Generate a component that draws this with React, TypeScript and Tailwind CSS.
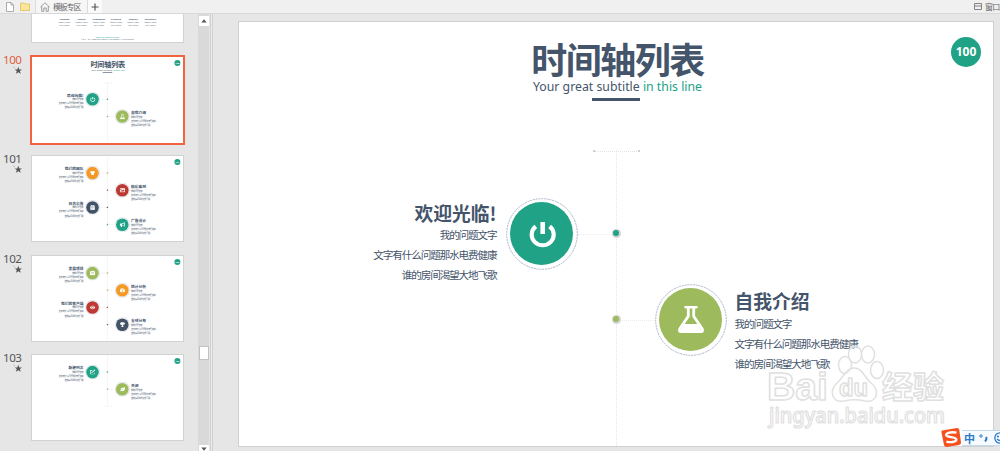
import { FC, ReactNode } from "react";
import {
  FaBullhorn,
  FaCalendarAlt,
  FaCamera,
  FaEye,
  FaExternalLinkAlt,
  FaImage,
  FaLeaf,
  FaTachometerAlt,
  FaTrophy,
  FaTshirt,
} from "react-icons/fa";

interface Item {
  title: string;
  color: string;
  icon: ReactNode;
}

interface SlideType {
  page: number;
  items: Item[];
  heading?: boolean;
  end?: boolean;
}

const GREEN = "#20a286";
const LIME = "#9dbb5c";
const ORANGE = "#f39a26";
const RED = "#bd3931";
const NAVY = "#425267";

const PowerIcon = () => (
  <svg width="28" height="28" viewBox="0 0 28 28" fill="none" stroke="white" strokeWidth="4.2">
    <path d="M7.8 6.4 A11 10.6 0 1 0 21.6 6.4" />
    <path d="M14.7 2 V14" strokeWidth="4.6" />
  </svg>
);

const FlaskIcon = () => (
  <svg width="28" height="28" viewBox="0 0 28 28" fill="none" stroke="white" strokeLinejoin="round">
    <path d="M8.6 1.1 H19.4" strokeWidth="2.7" strokeLinecap="round" />
    <path d="M11.3 2 V10.2 L2.8 22.8 Q1.6 25.6 4 25.6 H24 Q26.4 25.6 25.2 22.8 L16.7 10.2 V2" strokeWidth="2.8" />
    <path d="M7.2 18 H20.8 L25 25.6 H3 Z" fill="white" stroke="none" />
  </svg>
);

const slides: SlideType[] = [
  {
    page: 100,
    heading: true,
    items: [
      { title: "欢迎光临!", color: GREEN, icon: <PowerIcon /> },
      { title: "自我介绍", color: LIME, icon: <FlaskIcon /> },
    ],
  },
  {
    page: 101,
    items: [
      { title: "我们的团队", color: ORANGE, icon: <FaTshirt /> },
      { title: "精彩案例", color: RED, icon: <FaImage /> },
      { title: "日志公告", color: NAVY, icon: <FaCalendarAlt /> },
      { title: "广告设计", color: GREEN, icon: <FaBullhorn /> },
    ],
  },
  {
    page: 102,
    items: [
      { title: "发展项目", color: LIME, icon: <FaCamera /> },
      { title: "统计分析", color: ORANGE, icon: <FaTachometerAlt /> },
      { title: "我们的客户端", color: RED, icon: <FaEye /> },
      { title: "全球分布", color: NAVY, icon: <FaTrophy /> },
    ],
  },
  {
    page: 103,
    end: true,
    items: [
      { title: "新建列表", color: GREEN, icon: <FaExternalLinkAlt /> },
      { title: "关闭", color: LIME, icon: <FaLeaf /> },
    ],
  },
];

const Copy: FC<{ title: string; right?: boolean }> = ({ title, right }) => (
  <div
    className={
      right
        ? "pt-[13px] pl-2 text-left whitespace-nowrap"
        : "pt-[11px] pr-[9px] text-right whitespace-nowrap"
    }
  >
    <h2 className={right ? "mb-[3px] text-[18.8px] leading-[21px] font-bold" : "mb-[2px] text-[18.8px] leading-[21px] font-bold"}>
      {title}
    </h2>
    <div className="text-[10.6px] leading-[20.4px] tracking-[-1.12px]">
      <p>我的问题文字</p>
      <p>文字有什么问题那水电费健康</p>
      <p>谁的房间渴望大地飞歌</p>
    </div>
  </div>
);

const Circle: FC<{ item: Item }> = ({ item }) => (
  <div className="relative mt-[7px] flex size-[72px] shrink-0 items-center justify-center">
    <svg className="absolute inset-0" width="72" height="72" viewBox="0 0 72 72" fill="none">
      <circle cx="36" cy="36" r="35.3" stroke="#a9b6ca" strokeWidth="1" strokeDasharray="2 .8" />
    </svg>
    <div
      className="flex size-[63px] items-center justify-center rounded-full text-[26px] text-white"
      style={{ backgroundColor: item.color }}
    >
      {item.icon}
    </div>
  </div>
);

const Connector = () => (
  <div className="mt-[43px] w-[38.5px] shrink-0 border-t border-dotted border-[#e9ebec]" />
);

const TimelineRow: FC<{ item: Item; right: boolean }> = ({ item, right }) => (
  <div className="relative grid h-[86px] grid-cols-2">
    <div className="flex justify-end">
      {!right && (
        <>
          <Copy title={item.title} />
          <Circle item={item} />
          <Connector />
        </>
      )}
    </div>
    <div className="flex">
      {right && (
        <>
          <Connector />
          <Circle item={item} />
          <Copy title={item.title} right />
        </>
      )}
    </div>
    <span className="absolute top-[38px] left-[372.5px] flex size-[9px] items-center justify-center rounded-full bg-[#d3d3d3]">
      <span className="size-[6px] rounded-full" style={{ backgroundColor: item.color }} />
    </span>
  </div>
);

const Cap = () => (
  <div className="mx-auto flex w-[47px] items-center justify-between">
    <span className="size-[2px] bg-[#d0d0d0]" />
    <span className="h-px w-[42px] border-t border-dotted border-[#e4e4e4]" />
    <span className="size-[2px] bg-[#d0d0d0]" />
  </div>
);

const Slide: FC<{ slide: SlideType }> = ({ slide }) => (
  <div className="relative h-[424px] w-[754px] overflow-hidden bg-white text-[#44546a]">
    <span className="absolute top-[15px] right-[12px] flex size-[30px] items-center justify-center rounded-full bg-[#20a286] font-['Open_Sans',sans-serif] text-[12px] font-bold text-white">
      {slide.page}
    </span>
    {slide.heading ? (
      <header className="flex h-[128px] flex-col items-center pt-[15px] pl-[3px]">
        <h1 className="text-[36px] leading-[42px] font-bold tracking-[-1.5px]">时间轴列表</h1>
        <p className="font-['Noto_Sans',sans-serif] text-[12.3px] leading-[16px] whitespace-nowrap">
          Your great subtitle <span className="text-[#20a286]">in this line</span>
        </p>
        <div className="mt-[3px] mr-[3px] h-[3px] w-[48px] bg-[#44546a]" />
      </header>
    ) : (
      <div className="h-[42px]" />
    )}
    <div
      className={
        slide.heading
          ? "relative h-[296px]"
          : slide.end
            ? "relative -mt-[42px] h-[255px] pt-[42px]"
            : "relative -mt-[42px] h-[424px] pt-[42px]"
      }
    >
      <div className="absolute inset-y-0 left-[377px] border-l border-dotted border-[#e4e6e8]" />
      {slide.heading && (
        <div className="h-[40.5px]">
          <Cap />
        </div>
      )}
      {slide.items.map((item, index) => (
        <TimelineRow key={item.title} item={item} right={index % 2 === 1} />
      ))}
    </div>
    {slide.end && <Cap />}
  </div>
);

const Thumbnail: FC<{ slide: SlideType; active: boolean }> = ({ slide, active }) => (
  <div className="flex h-[99.3px]">
    <div
      className={
        active
          ? "-mt-[1px] w-[30px] shrink-0 pl-[3px] text-[#e0603f]"
          : "-mt-[1px] w-[30px] shrink-0 pl-[3px] text-[#555]"
      }
    >
      <p className="font-['Noto_Sans',sans-serif] text-[11.6px] leading-[12px] tracking-[-0.5px]">
        {slide.page}
      </p>
      <svg className="ml-[10px]" width="10" height="9" viewBox="0 0 10 9">
        <path
          d="M5.3 .8 L6.3 3.4 H9 L6.9 5 L7.7 7.8 L5.3 6.2 L2.9 7.8 L3.8 5 L1.7 3.4 H4.3 Z"
          fill="#555"
        />
        <path d="M.5 .8 L2 2.2" stroke="#999" strokeWidth=".7" />
      </svg>
    </div>
    <div
      className={
        active
          ? "h-[90px] w-[155px] border-2 border-[#f26440] bg-white"
          : "h-[90px] w-[155px] p-[2px]"
      }
    >
      <div
        className={
          active
            ? "h-[86px] w-[151px] overflow-hidden"
            : "h-[85px] w-[151px] overflow-hidden bg-white ring-1 ring-[#d2d2d2]"
        }
      >
        <div className="origin-top-left scale-[0.2] [&_.border-dotted]:border-[#a5a9ad] [&_circle]:stroke-[3px]">
          <Slide slide={slide} />
        </div>
      </div>
    </div>
  </div>
);

const columns = ["Layouts", "Search", "Customize", "Pictures", "Sharing", "Structure"];

const PreviousThumbnail = () => (
  <div className="ml-[32px] h-[28px] w-[151px] overflow-hidden bg-white ring-1 ring-[#d2d2d2]">
    <div className="h-[140px] w-[754px] origin-top-left scale-[0.2] pt-[20px] text-center font-['Open_Sans',sans-serif] text-[#44546a]">
      <div className="mx-auto grid w-[516px] grid-cols-6 text-[12px] leading-[14px]">
        {columns.map((name) => (
          <div key={name}>
            <p className="font-bold">{name}</p>
            <p>Insert your</p>
            <p>text here</p>
          </div>
        ))}
      </div>
      <p className="mt-[46px] text-[11px] leading-[12px] text-[#20a286]">www.yourwebsite.com</p>
      <p className="text-[8px] leading-[12px]">
        © 2014 - PPT - PowerPoint Template. Your Company. All rights reserved
      </p>
    </div>
  </div>
);

const TopBar = () => (
  <header className="flex h-[14px] shrink-0 items-center border-b border-[#d9d9d9] bg-[#f0f0f0] text-[#666]">
    <div className="flex w-[35px] items-center gap-[6px] pl-[6px]">
      <svg width="8" height="10" viewBox="0 0 8 10" fill="white" stroke="#999" strokeWidth=".8">
        <path d="M.5 .5 H5 L7.5 3 V9.5 H.5 Z M5 .5 V3 H7.5" />
      </svg>
      <svg width="10" height="9" viewBox="0 0 10 9" fill="#fbe49b" stroke="#e3bd55" strokeWidth=".8">
        <path d="M.5 1 H4 L5 2 H9.5 V8.5 H.5 Z" />
      </svg>
    </div>
    <div className="flex h-full w-[53px] items-center gap-[3px] border-x border-[#dcdcdc] bg-[#f6f6f6] pl-[4px]">
      <svg width="10" height="10" viewBox="0 0 10 10" fill="none" stroke="#888" strokeWidth=".8">
        <path d="M.5 5 L5 .8 L9.5 5 M1.7 4.2 V9.3 H3.8 V6 H6.2 V9.3 H8.3 V4.2" />
      </svg>
      <span className="text-[8px] leading-[12px] tracking-[-1.2px] whitespace-nowrap">模板专区</span>
    </div>
    <div className="flex h-full w-[14px] items-center justify-center bg-[#fafafa]">
      <svg width="8" height="8" viewBox="0 0 8 8" stroke="#555" strokeWidth="1.2">
        <path d="M4 .5 V7.5 M.5 4 H7.5" />
      </svg>
    </div>
    <div className="ml-auto flex w-[26px] items-center gap-[3px] overflow-hidden">
      <svg className="shrink-0" width="8" height="7" viewBox="0 0 8 7" fill="none" stroke="#777" strokeWidth=".9">
        <path d="M.5 .5 H7.5 V6.5 H.5 Z M.5 3 H7.5" />
      </svg>
      <span className="text-[8px] leading-[12px] tracking-[-0.8px] whitespace-nowrap">窗口</span>
    </div>
  </header>
);

const ScrollBar = () => (
  <div className="flex w-[11px] flex-col items-center bg-[#d9d9d9]">
    <div className="mt-[2px] flex h-[10px] w-[10px] items-center justify-center bg-white">
      <svg width="6" height="4" viewBox="0 0 6 4">
        <path d="M3 .3 L5.7 3.5 H.3 Z" fill="#555" />
      </svg>
    </div>
    <div className="mt-[320px] h-[14px] w-[10px] border border-[#c2c2c2] bg-white" />
    <div className="mt-auto flex h-[6px] w-[10px] items-end justify-center bg-white">
      <svg width="6" height="4" viewBox="0 0 6 4">
        <path d="M.3 .5 H5.7 L3 3.7 Z" fill="#555" />
      </svg>
    </div>
  </div>
);

const Watermark = () => (
  <svg
    className="absolute top-[343px] left-[764px]"
    width="184"
    height="90"
    viewBox="0 0 184 90"
    fill="white"
    fillOpacity=".5"
    stroke="#e0e0e0"
    strokeWidth="1.5"
    strokeLinejoin="round"
    fontFamily="Liberation Sans, sans-serif"
    fontWeight="bold"
  >
    <text x="3" y="57" fontSize="39" textLength="61" lengthAdjust="spacingAndGlyphs">
      Bai
    </text>
    <ellipse cx="81" cy="22" rx="6.5" ry="8.5" />
    <ellipse cx="91" cy="11.5" rx="6.5" ry="8.5" />
    <ellipse cx="104" cy="11.5" rx="6.5" ry="8.5" />
    <ellipse cx="113" cy="27" rx="6.5" ry="8.5" />
    <path d="M90 25 C98 25 99 32 106 39 C117 48 113 60 101 58 Q90 55.5 80 58 C68 60 64 48 74 39 C81 32 83 25 90 25 Z" />
    <text x="75" y="53" fontSize="24" textLength="29" lengthAdjust="spacingAndGlyphs">
      du
    </text>
    <text x="118" y="55" fontSize="31" fontFamily="Noto Sans CJK SC, sans-serif" textLength="62">
      经验
    </text>
    <text x="5" y="80" fontSize="21" fontFamily="Noto Sans, sans-serif" fontWeight="500" strokeWidth="1.2" textLength="176" lengthAdjust="spacingAndGlyphs">
      jingyan.baidu.com
    </text>
  </svg>
);

const ImeBar = () => (
  <div className="absolute top-[427px] left-[941px] flex h-[21px] w-[59px] items-center overflow-hidden">
    <svg className="relative shrink-0" width="21" height="21" viewBox="0 0 21 21">
      <path d="M1 3.5 L16 1 Q18 1 18.3 3 L20 15.5 Q20 17.5 18 18 L5.5 20 Q3.5 20 3 18 L.5 5.5 Q.3 4 1 3.5 Z" fill="#f4511e" />
      <path
        d="M15.5 5.6 C10 4.5 5 6 5.2 8.2 C5.4 10.8 15 9.4 15.3 12.4 C15.5 15.4 9 15.6 5.4 14.6"
        fill="none"
        stroke="white"
        strokeWidth="2.4"
      />
    </svg>
    <div className="flex h-[16px] flex-1 items-center gap-[4px] border-y border-[#c5d9ee] bg-[#f7fbff] pl-[2px] text-[#2a7bc8]">
      <span className="text-[11px] leading-[14px] font-bold">中</span>
      <svg className="shrink-0" width="9" height="9" viewBox="0 0 9 9" fill="none" stroke="currentColor">
        <circle cx="2" cy="3" r="1.2" />
        <path d="M7 4 Q8.3 6 6 8.4" strokeWidth="2" />
      </svg>
      <svg className="ml-[2px] shrink-0" width="12" height="12" viewBox="0 0 12 12" fill="none" stroke="currentColor" strokeWidth="1.3">
        <circle cx="6" cy="6" r="5.2" />
        <path d="M3 4.5 H5 M3 7 Q6 10 9 7" />
      </svg>
    </div>
  </div>
);

export default function App() {
  return (
    <div className="relative flex h-[451px] w-[1000px] flex-col overflow-hidden bg-[#e6e6e6] font-['Noto_Sans_CJK_SC',sans-serif]">
      <TopBar />
      <div className="flex min-h-0 flex-1">
        <aside className="w-[198px] shrink-0 overflow-hidden">
          <PreviousThumbnail />
          <div className="pt-[13px]">
            {slides.map((slide) => (
              <Thumbnail key={slide.page} slide={slide} active={slide.page === 100} />
            ))}
          </div>
        </aside>
        <ScrollBar />
        <div className="ml-[1px] w-[3px] border-x border-[#d0d0d0] bg-[#ececec]" />
        <main className="flex-1 pt-[8px] pl-[26px]">
          <div className="h-[424px] w-[754px] ring-1 ring-[#d0d0d0]">
            <Slide slide={slides[0]} />
          </div>
        </main>
      </div>
      <Watermark />
      <ImeBar />
    </div>
  );
}
